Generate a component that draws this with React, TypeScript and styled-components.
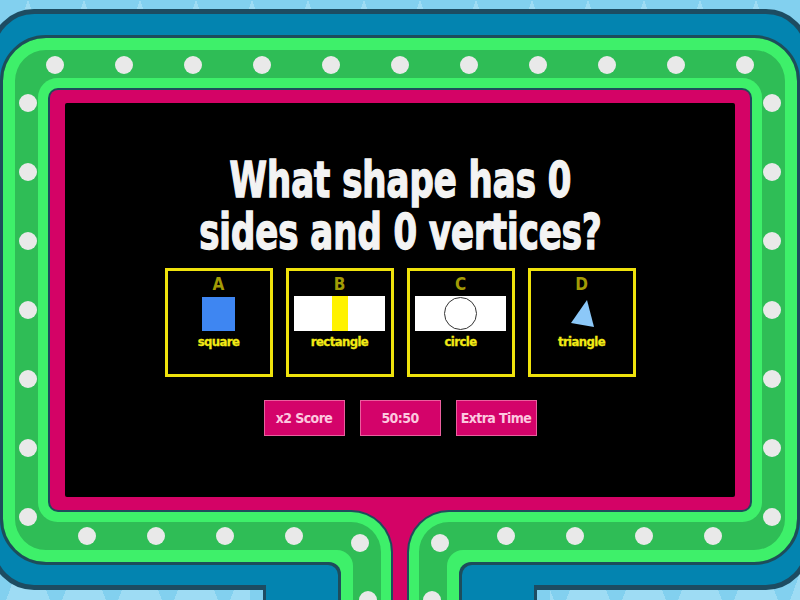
import React from "react";
import styled, { createGlobalStyle } from "styled-components";

const GlobalStyle = createGlobalStyle`
  html, body {
    margin: 0;
    padding: 0;
  }
  body {
    width: 800px;
    height: 600px;
    overflow: hidden;
    background-color: #82d0ef;
    background-image: conic-gradient(from 160deg at 50% 0%, #9edcf4 0deg 40deg, transparent 40deg);
    background-size: 56px 60px;
    font-family: "Liberation Sans Narrow", "DejaVu Sans Condensed", "Liberation Sans", sans-serif;
  }
`;

const Stage = styled.div`
  position: relative;
  width: 800px;
  height: 600px;
  overflow: hidden;
`;

const BlueFrame = styled.div`
  box-sizing: border-box;
  width: 820px;
  height: 581px;
  margin: 9px 0 0 -10px;
  padding: 21px 5px 0;
  border: 5px solid #1d4c62;
  border-radius: 44px;
  background: #0384b0;
`;

const GreenRing = styled.div`
  position: relative;
  box-sizing: border-box;
  width: 800px;
  height: 530px;
  padding: 52px 47px;
  border: 3px solid #1d4d5b;
  border-radius: 46px;
  background: #2fbd56;
  box-shadow: inset 0 0 0 12px #3ef06a;
`;

const Screen = styled.div`
  box-sizing: border-box;
  width: 700px;
  height: 420px;
  padding: 13px 15px;
  border-radius: 8px;
  background: #d40366;
  box-shadow: 0 0 0 2px #1d4d5b, 0 0 0 12px #3ef06a;
`;

const Display = styled.div`
  box-sizing: border-box;
  height: 100%;
  padding-top: 52px;
  display: flex;
  flex-direction: column;
  align-items: center;
  background: #000;
  border-radius: 2px;
`;

const Question = styled.h1`
  margin: 0;
  color: #f3f3f3;
  font-size: 49px;
  line-height: 52px;
  font-weight: 700;
  text-align: center;
  white-space: nowrap;
  -webkit-text-stroke: 1.4px #f3f3f3;
  transform: scaleX(0.77);
`;

const Answers = styled.div`
  display: flex;
  gap: 13px;
  margin-top: 9px;
`;

const Card = styled.div`
  box-sizing: border-box;
  width: 108px;
  height: 109px;
  padding-top: 4px;
  display: flex;
  flex-direction: column;
  align-items: center;
  border: 3px solid #efe20c;
`;

const Letter = styled.div`
  color: #a29b05;
  font-size: 17px;
  line-height: 18px;
  font-weight: 700;
`;

const ShapeSlot = styled.div`
  height: 35px;
  margin-top: 3px;
  display: flex;
  align-items: center;
  justify-content: center;
`;

const Label = styled.div`
  margin-top: 3px;
  color: #f2ea15;
  font-size: 13px;
  line-height: 16px;
  font-weight: 700;
  letter-spacing: -0.6px;
  -webkit-text-stroke: 0.3px #f2ea15;
`;

const Square = styled.div`
  width: 33px;
  height: 34px;
  background: #3e86f2;
`;

const WhiteStrip = styled.div`
  width: 91px;
  height: 35px;
  background: #fff;
  display: flex;
  align-items: center;
  justify-content: center;
`;

const Bar = styled.div`
  width: 16px;
  height: 35px;
  background: #fff200;
`;

const Ring = styled.div`
  box-sizing: border-box;
  width: 33px;
  height: 33px;
  border: 1px solid #333;
  border-radius: 50%;
`;

const PowerUps = styled.div`
  display: flex;
  gap: 15px;
  margin-top: 23px;
`;

const PowerUp = styled.button`
  box-sizing: border-box;
  width: 81px;
  height: 36px;
  padding: 0;
  border: 1px solid #ea5f9e;
  background: #d4036a;
  color: #fcc8df;
  font-family: inherit;
  font-size: 14px;
  font-weight: 700;
  letter-spacing: -0.6px;
  cursor: pointer;
`;

const DotRow = styled.div<{ $vertical?: boolean }>`
  position: absolute;
  display: flex;
  flex-direction: ${({ $vertical }) => ($vertical ? "column" : "row")};
  justify-content: space-between;
`;

const Dot = styled.span`
  width: 18px;
  height: 18px;
  border-radius: 50%;
  background: #e9e9e9;
`;

const Stem = styled.svg`
  position: absolute;
  left: 250px;
  top: 500px;
`;

const dots = (n: number) => Array.from({ length: n }, (_, i) => <Dot key={i} />);

// region below-left of an edge that runs along y, then turns down at x
const edge = (y: number, x: number, r: number) =>
  `M-1,${y} H${x - r} A${r},${r} 0 0 1 ${x},${y + r} V101 H-1 Z`;

const StemHalf: React.FC = () => (
  <>
    <rect x={-1} y={-1} width={152} height={102} fill="#d40366" />
    <path d={edge(10, 143, 42)} fill="#1d4d5b" />
    <path d={edge(12, 141, 40)} fill="#3ef06a" />
    <path d={edge(22, 131, 30)} fill="#2fbd56" />
    <path d={edge(50, 103, 16)} fill="#3ef06a" />
    <path d={edge(62, 91, 12)} fill="#1d4d5b" />
    <path d={edge(65, 88, 10)} fill="#0384b0" />
    <rect x={-1} y={85} width={17} height={5} fill="#1d4c62" />
    <rect x={13} y={85} width={3} height={16} fill="#1d4c62" />
    <rect x={-1} y={90} width={14} height={11} fill="#82d0ef" />
    <circle cx={44} cy={36} r={9} fill="#e9e9e9" />
    <circle cx={110} cy={43} r={9} fill="#e9e9e9" />
    <circle cx={118} cy={100} r={9} fill="#e9e9e9" />
  </>
);

const answers = [
  { letter: "A", label: "square", shape: <Square /> },
  {
    letter: "B",
    label: "rectangle",
    shape: (
      <WhiteStrip>
        <Bar />
      </WhiteStrip>
    ),
  },
  {
    letter: "C",
    label: "circle",
    shape: (
      <WhiteStrip>
        <Ring />
      </WhiteStrip>
    ),
  },
  {
    letter: "D",
    label: "triangle",
    shape: (
      <svg width="34" height="35" viewBox="0 0 34 35">
        <polygon points="22,4 6,27 29,31" fill="#8cc8f8" />
      </svg>
    ),
  },
];

const App: React.FC = () => {
  return (
    <>
      <GlobalStyle />
      <Stage>
        <BlueFrame>
          <GreenRing>
            <Screen>
              <Display>
                <Question>
                  What shape has 0<br />
                  sides and 0 vertices?
                </Question>
                <Answers>
                  {answers.map((a) => (
                    <Card key={a.letter}>
                      <Letter>{a.letter}</Letter>
                      <ShapeSlot>{a.shape}</ShapeSlot>
                      <Label>{a.label}</Label>
                    </Card>
                  ))}
                </Answers>
                <PowerUps>
                  <PowerUp>x2 Score</PowerUp>
                  <PowerUp>50:50</PowerUp>
                  <PowerUp>Extra Time</PowerUp>
                </PowerUps>
              </Display>
            </Screen>
            <DotRow style={{ left: 43, top: 18, width: 708, height: 18 }}>{dots(11)}</DotRow>
            <DotRow $vertical style={{ left: 16, top: 56, width: 18, height: 432 }}>{dots(7)}</DotRow>
            <DotRow $vertical style={{ left: 760, top: 56, width: 18, height: 432 }}>{dots(7)}</DotRow>
            <DotRow style={{ left: 75, top: 489, width: 225, height: 18 }}>{dots(4)}</DotRow>
            <DotRow style={{ left: 494, top: 489, width: 225, height: 18 }}>{dots(4)}</DotRow>
          </GreenRing>
        </BlueFrame>
        <Stem width="300" height="100" viewBox="0 0 300 100">
          <StemHalf />
          <g transform="matrix(-1 0 0 1 300 0)">
            <StemHalf />
          </g>
        </Stem>
      </Stage>
    </>
  );
};

export default App;
